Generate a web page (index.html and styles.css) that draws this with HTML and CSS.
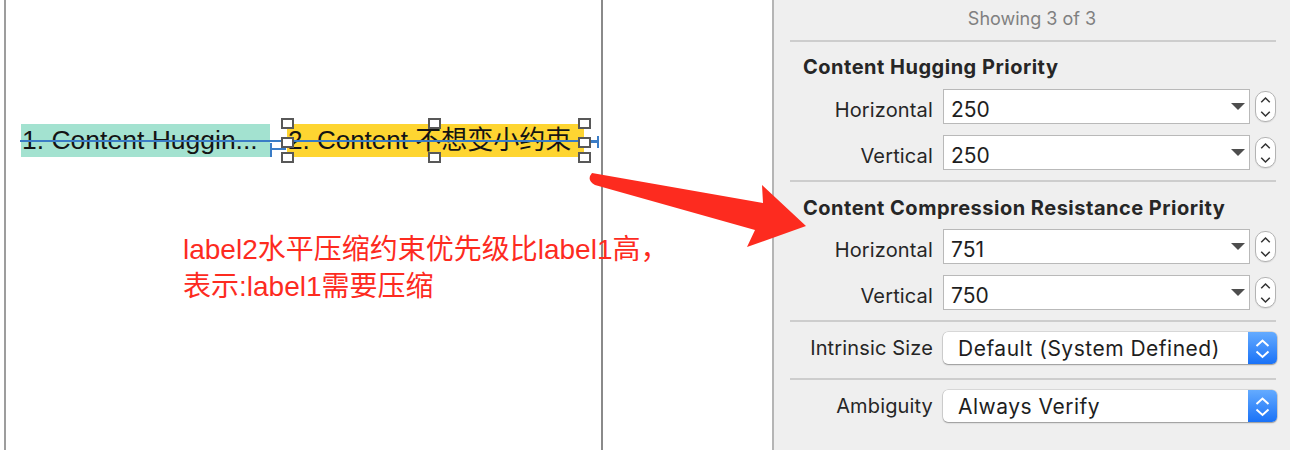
FILE: index.html
```html
<!DOCTYPE html>
<html>
<head>
<meta charset="utf-8">
<link rel="stylesheet" href="styles.css">
</head>
<body>
<div class="app">
  <div class="canvas">
    <div class="scene">
      <svg class="constraints" width="595" height="450" viewBox="0 0 595 450">
        <rect x="14" y="140" width="578" height="2" fill="#3a7cc6"/>
        <rect x="264" y="143" width="2" height="14" fill="#3a7cc6"/>
        <rect x="264" y="148" width="16" height="2" fill="#3a7cc6"/>
        <rect x="591" y="136" width="2" height="12" fill="#3a7cc6"/>
        <rect x="584" y="141" width="8" height="2" fill="#3a7cc6"/>
      </svg>
      <div class="labels">
        <div class="label l1">1. Content Huggin...</div>
        <div class="label l2">2. Content 不想变小约束
          <span class="h h-tl"></span><span class="h h-ml"></span><span class="h h-bl"></span>
          <span class="h h-tc"></span><span class="h h-bc"></span>
          <span class="h h-tr"></span><span class="h h-mr"></span><span class="h h-br"></span>
        </div>
      </div>
    </div>
  </div>

  <div class="inspector">
    <div class="showing">Showing 3 of 3</div>
    <div class="sep"></div>

    <div class="section s1">
      <div class="heading">Content Hugging Priority</div>
      <div class="rows">
        <div class="row">
          <div class="lbl lbl-shift">Horizontal</div>
          <div class="field"><span class="val">250</span><span class="tri"></span></div>
          <div class="stepper"><svg width="20" height="30" viewBox="0 0 20 30"><polyline points="5.5,10 10,5.5 14.5,10" fill="none" stroke="#333" stroke-width="1.6"/><polyline points="5.5,20 10,24.5 14.5,20" fill="none" stroke="#333" stroke-width="1.6"/></svg></div>
        </div>
        <div class="row">
          <div class="lbl lbl-shift">Vertical</div>
          <div class="field"><span class="val">250</span><span class="tri"></span></div>
          <div class="stepper"><svg width="20" height="30" viewBox="0 0 20 30"><polyline points="5.5,10 10,5.5 14.5,10" fill="none" stroke="#333" stroke-width="1.6"/><polyline points="5.5,20 10,24.5 14.5,20" fill="none" stroke="#333" stroke-width="1.6"/></svg></div>
        </div>
      </div>
    </div>
    <div class="sep"></div>

    <div class="section s2">
      <div class="heading">Content Compression Resistance Priority</div>
      <div class="rows">
        <div class="row">
          <div class="lbl lbl-shift">Horizontal</div>
          <div class="field"><span class="val">751</span><span class="tri"></span></div>
          <div class="stepper"><svg width="20" height="30" viewBox="0 0 20 30"><polyline points="5.5,10 10,5.5 14.5,10" fill="none" stroke="#333" stroke-width="1.6"/><polyline points="5.5,20 10,24.5 14.5,20" fill="none" stroke="#333" stroke-width="1.6"/></svg></div>
        </div>
        <div class="row">
          <div class="lbl lbl-shift">Vertical</div>
          <div class="field"><span class="val">750</span><span class="tri"></span></div>
          <div class="stepper"><svg width="20" height="30" viewBox="0 0 20 30"><polyline points="5.5,10 10,5.5 14.5,10" fill="none" stroke="#333" stroke-width="1.6"/><polyline points="5.5,20 10,24.5 14.5,20" fill="none" stroke="#333" stroke-width="1.6"/></svg></div>
        </div>
      </div>
    </div>
    <div class="sep"></div>

    <div class="section s3">
      <div class="row prow">
        <div class="lbl">Intrinsic Size</div>
        <div class="popup"><span class="ptext">Default (System Defined)</span><span class="pbtn"><svg width="29" height="32" viewBox="0 0 29 32"><polyline points="8.5,14 14.5,8.5 20.5,14" fill="none" stroke="#fff" stroke-width="2"/><polyline points="8.5,19.5 14.5,25 20.5,19.5" fill="none" stroke="#fff" stroke-width="2"/></svg></span></div>
      </div>
    </div>
    <div class="sep"></div>

    <div class="section s4">
      <div class="row prow">
        <div class="lbl">Ambiguity</div>
        <div class="popup"><span class="ptext">Always Verify</span><span class="pbtn"><svg width="29" height="32" viewBox="0 0 29 32"><polyline points="8.5,14 14.5,8.5 20.5,14" fill="none" stroke="#fff" stroke-width="2"/><polyline points="8.5,19.5 14.5,25 20.5,19.5" fill="none" stroke="#fff" stroke-width="2"/></svg></span></div>
      </div>
    </div>
  </div>

  <div class="note">label2水平压缩约束优先级比label1高，<br>表示:label1需要压缩</div>

  <svg class="arrow" width="1290" height="450" viewBox="0 0 1290 450">
    <path d="M592,173 L763,203 L762,185 L806,226 L747,247 L755,230 L595,185 Q586,180 592,173 Z" fill="#fd2b1f"/>
  </svg>
</div>
</body>
</html>
```

FILE: styles.css
```css
* { box-sizing: border-box; }

html, body {
  margin: 0;
  padding: 0;
  background: #ffffff;
}

.app {
  position: relative;
  display: flex;
  width: 1290px;
  height: 450px;
  overflow: hidden;
  font-family: Inter, "Noto Sans CJK SC", sans-serif;
}

/* ---------- canvas ---------- */
.canvas {
  flex: 0 0 772px;
  height: 450px;
  background: #ffffff;
  padding-left: 4px;
  display: flex;
}

.scene {
  position: relative;
  width: 599px;
  height: 450px;
  border-left: 2px solid #9d9d9d;
  border-right: 2px solid #8a8a8a;
  padding: 124px 0 0 15px;
}

.constraints {
  position: absolute;
  left: 0;
  top: 0;
  z-index: 1;
}

.labels {
  display: flex;
  gap: 17px;
}

.label {
  height: 33px;
  line-height: 33px;
  font-family: "Liberation Sans", "Noto Sans CJK SC", sans-serif;
  font-size: 26px;
  color: #141414;
  white-space: nowrap;
}

.l1 {
  width: 249px;
  background: #a3e2d0;
  padding-left: 1px;
  font-size: 26.5px;
  overflow: hidden;
}

.l2 {
  position: relative;
  width: 297px;
  background: #fed531;
  padding-left: 1px;
}

.h {
  position: absolute;
  width: 13px;
  height: 11px;
  background: #ffffff;
  border: 2px solid #585858;
  z-index: 2;
}
.h-tl { left: -6px; top: -6px; }
.h-ml { left: -6px; top: 13px; }
.h-bl { left: -6px; bottom: -6px; }
.h-tc { left: 141px; top: -6px; }
.h-bc { left: 141px; bottom: -6px; }
.h-tr { right: -7px; top: -6px; }
.h-mr { right: -7px; top: 13px; }
.h-br { right: -7px; bottom: -6px; }

/* ---------- inspector ---------- */
.inspector {
  flex: 1;
  height: 450px;
  background: #efefef;
  border-left: 2px solid #b5b5b5;
  color: #262626;
}

.showing {
  height: 40px;
  line-height: 37px;
  text-align: center;
  font-size: 18px;
  color: #808080;
}

.sep {
  height: 2px;
  margin: 0 14px 0 16px;
  background: #cdcdcd;
}

.section {
  display: flex;
  flex-direction: column;
}

.s1 { padding: 13px 0 10px; }
.s2 { padding: 14px 0 10px; }
.s3 { padding: 10px 0 14px; }
.s4 { padding: 10px 0 10px; }

.heading {
  height: 24px;
  line-height: 24px;
  padding-left: 29px;
  font-size: 20px;
  letter-spacing: 0.5px;
  font-weight: 700;
  color: #262626;
  white-space: nowrap;
}

.s1 .heading { margin-bottom: 10px; }
.s2 .heading { margin-bottom: 9px; }

.rows {
  display: flex;
  flex-direction: column;
  gap: 11px;
}

.row {
  display: flex;
  align-items: center;
  height: 35px;
}

.prow { height: 32px; }

.lbl {
  width: 159px;
  margin-right: 10px;
  text-align: right;
  font-size: 20px;
  letter-spacing: 0.15px;
  color: #262626;
  white-space: nowrap;
}

.lbl-shift { padding-top: 6px; }

.field {
  width: 307px;
  height: 35px;
  display: flex;
  align-items: center;
  background: #ffffff;
  border: 1px solid #b9b9b9;
  padding-left: 7px;
}

.val {
  font-size: 21px;
  color: #1e1e1e;
  padding-top: 6px;
}

.tri {
  margin-left: auto;
  margin-right: 4px;
  width: 0;
  height: 0;
  border-left: 7px solid transparent;
  border-right: 7px solid transparent;
  border-top: 7px solid #4e4e4e;
}

.stepper {
  margin-left: 5px;
  width: 21px;
  height: 31px;
  background: #ffffff;
  border: 1px solid #b3b3b3;
  border-radius: 10px;
  display: flex;
  align-items: center;
  justify-content: center;
  box-shadow: 0 1px 1px rgba(0,0,0,0.08);
}
.stepper svg { display: block; }

.popup {
  width: 334px;
  height: 32px;
  display: flex;
  align-items: center;
  background: #ffffff;
  border-radius: 5px;
  box-shadow: 0 0 0 0.5px rgba(0,0,0,0.18), 0 1px 1.5px rgba(0,0,0,0.3);
  overflow: hidden;
}

.ptext {
  flex: 1;
  padding-left: 15px;
  font-size: 21px;
  letter-spacing: 0.5px;
  color: #1e1e1e;
  white-space: nowrap;
}

.pbtn {
  width: 29px;
  height: 32px;
  background: linear-gradient(#64abff, #1a72f7);
}
.pbtn svg { display: block; }

/* ---------- annotations ---------- */
.note {
  position: absolute;
  left: 183px;
  top: 231px;
  font-family: "Liberation Sans", "Noto Sans CJK SC", sans-serif;
  font-size: 28px;
  line-height: 37px;
  color: #fd2b1f;
  white-space: nowrap;
  z-index: 3;
}

.arrow {
  position: absolute;
  left: 0;
  top: 0;
  z-index: 4;
  pointer-events: none;
}
```
